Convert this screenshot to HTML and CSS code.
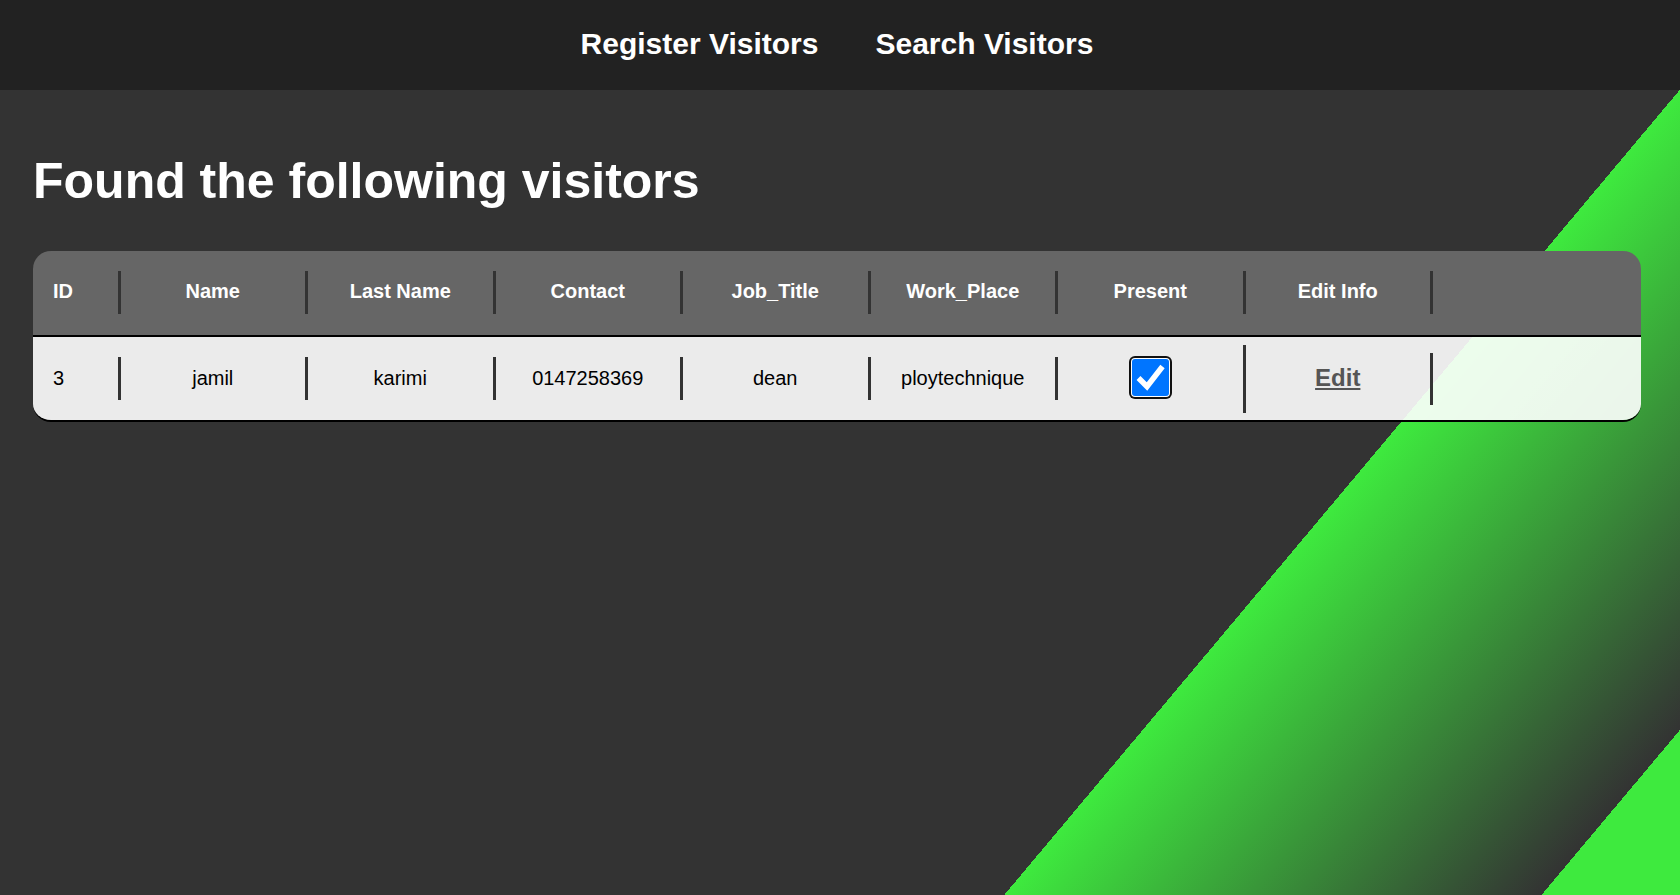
FILE: index.html
```html
<!DOCTYPE html>
<html lang="en">
<head>
<meta charset="utf-8">
<title>Search Visitors</title>
<link rel="stylesheet" href="styles.css">
</head>
<body>
<nav class="topnav">
  <a href="#" class="nav-link">Register Visitors</a>
  <a href="#" class="nav-link">Search Visitors</a>
</nav>
<main class="content">
  <h1 class="title">Found the following visitors</h1>
  <div class="visitors">
    <div class="visitors-row visitors-head">
      <div class="cell cell-id"><div class="cell-inner">ID</div></div>
      <div class="cell"><div class="cell-inner">Name</div></div>
      <div class="cell"><div class="cell-inner">Last Name</div></div>
      <div class="cell"><div class="cell-inner">Contact</div></div>
      <div class="cell"><div class="cell-inner">Job_Title</div></div>
      <div class="cell"><div class="cell-inner">Work_Place</div></div>
      <div class="cell"><div class="cell-inner">Present</div></div>
      <div class="cell"><div class="cell-inner">Edit Info</div></div>
      <div class="cell"></div>
    </div>
    <div class="visitors-row visitors-body">
      <div class="cell cell-id"><div class="cell-inner">3</div></div>
      <div class="cell"><div class="cell-inner">jamil</div></div>
      <div class="cell"><div class="cell-inner">karimi</div></div>
      <div class="cell"><div class="cell-inner">0147258369</div></div>
      <div class="cell"><div class="cell-inner">dean</div></div>
      <div class="cell"><div class="cell-inner">ploytechnique</div></div>
      <div class="cell"><div class="cell-inner cell-present">
        <span class="present-box" role="checkbox" aria-checked="true">
          <svg class="present-check" viewBox="0 0 37 37" width="37" height="37"><polyline points="6.5,19 15,27.5 30.5,7.5" fill="none" stroke="#fff" stroke-width="5.5"/></svg>
        </span>
      </div></div>
      <div class="cell"><div class="cell-inner cell-edit"><a href="#" class="edit-link">Edit</a></div></div>
      <div class="cell"></div>
    </div>
  </div>
</main>
</body>
</html>
```
FILE: styles.css
```css
html, body {
  margin: 0;
  height: 100%;
}

body {
  font-family: "Liberation Sans", Arial, sans-serif;
  background: linear-gradient(130deg, #333 72.2%, #3eea3e 72.2%, #333 94.3%, #3eea3e 94.3%);
  color: #fff;
}

.topnav {
  height: 90px;
  box-sizing: border-box;
  background: #222;
  display: flex;
  justify-content: center;
  align-items: flex-start;
  gap: 57px;
  padding: 27px 6px 0 0;
}

.nav-link {
  color: #fff;
  font-weight: bold;
  font-size: 30px;
  line-height: 34.5px;
  text-decoration: none;
}

.content {
  padding: 62px 39px 0 33px;
}

.title {
  margin: 0 0 41px;
  font-size: 50px;
  line-height: 58px;
  font-weight: bold;
  color: #fff;
}

.visitors {
  border-radius: 18px;
  overflow: hidden;
  border-bottom: 2px solid #000;
}

.visitors-row {
  display: grid;
  grid-template-columns: 87.5px repeat(7, 187.5px) 1fr;
  align-items: center;
}

.visitors-head {
  height: 84px;
  background: #666;
  border-bottom: 2px solid #000;
  color: #fff;
  font-weight: bold;
}

.visitors-head .cell {
  margin-bottom: 2px;
}

.visitors-head .cell-inner {
  padding: 9px 0 11px;
}

.visitors-body {
  height: 83px;
  background: rgba(255, 255, 255, 0.9);
  color: #000;
}

.cell-inner {
  border-right: 3px solid #333;
  padding: 10px 0;
  font-size: 20px;
  line-height: 23px;
  text-align: center;
}

.visitors-head .cell-id .cell-inner,
.cell-id .cell-inner {
  text-align: left;
  padding-left: 20px;
}

.cell-present {
  height: 48px;
  display: flex;
  justify-content: center;
  align-items: center;
}

.present-box {
  display: block;
  width: 37px;
  height: 37px;
  background: #0075ff;
  border-radius: 3px;
  box-shadow: 0 0 0 1px #fff, 0 0 0 3px #111;
  margin: 0 0 3px 0;
}

.present-check {
  display: block;
}

.cell-edit {
  font-size: 24px;
  line-height: 28px;
  padding: 11px 0 13px;
}

.edit-link {
  color: #555;
  font-weight: bold;
  text-decoration: underline;
}
```
